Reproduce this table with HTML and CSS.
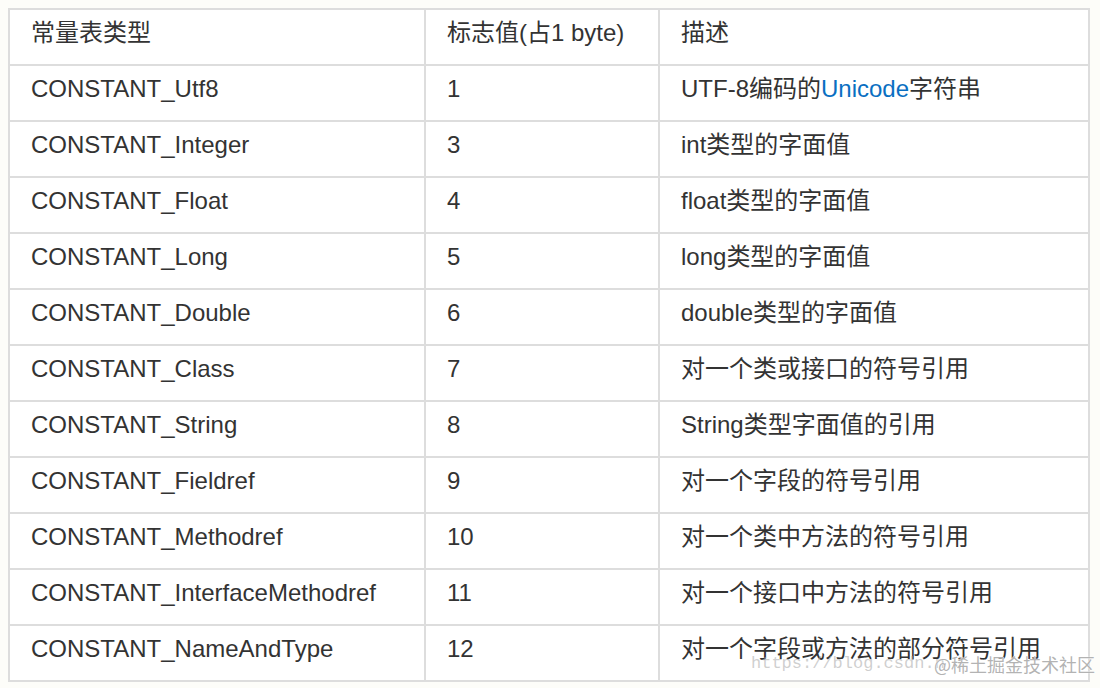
FILE: index.html
```html
<!DOCTYPE html>
<html lang="zh-CN">
<head>
<meta charset="utf-8">
<title>常量表类型</title>
<link rel="stylesheet" href="styles.css">
</head>
<body>
<div class="page">
  <table class="ctable">
    <colgroup>
      <col class="c1">
      <col class="c2">
      <col class="c3">
    </colgroup>
    <tbody>
      <tr><td>常量表类型</td><td>标志值(占1 byte)</td><td>描述</td></tr>
      <tr><td>CONSTANT_Utf8</td><td>1</td><td>UTF-8编码的<span class="link">Unicode</span>字符串</td></tr>
      <tr><td>CONSTANT_Integer</td><td>3</td><td>int类型的字面值</td></tr>
      <tr><td>CONSTANT_Float</td><td>4</td><td>float类型的字面值</td></tr>
      <tr><td>CONSTANT_Long</td><td>5</td><td>long类型的字面值</td></tr>
      <tr><td>CONSTANT_Double</td><td>6</td><td>double类型的字面值</td></tr>
      <tr><td>CONSTANT_Class</td><td>7</td><td>对一个类或接口的符号引用</td></tr>
      <tr><td>CONSTANT_String</td><td>8</td><td>String类型字面值的引用</td></tr>
      <tr><td>CONSTANT_Fieldref</td><td>9</td><td>对一个字段的符号引用</td></tr>
      <tr><td>CONSTANT_Methodref</td><td>10</td><td>对一个类中方法的符号引用</td></tr>
      <tr><td>CONSTANT_InterfaceMethodref</td><td>11</td><td>对一个接口中方法的符号引用</td></tr>
      <tr><td>CONSTANT_NameAndType</td><td>12</td><td>对一个字段或方法的部分符号引用</td></tr>
    </tbody>
  </table>
  <div class="wm-url">https://blog.csdn.n</div>
  <div class="wm-brand">@稀土掘金技术社区</div>
</div>
</body>
</html>
```

FILE: styles.css
```css
html, body {
  margin: 0;
  padding: 0;
  background: #fdfdf9;
}

.page {
  position: relative;
  width: 1100px;
  height: 688px;
  overflow: hidden;
  padding: 8px 0 0 8px;
  box-sizing: border-box;
}

.ctable {
  border-collapse: collapse;
  table-layout: fixed;
  width: 1080px;
  background: #ffffff;
  font-family: "Liberation Sans", "Noto Sans CJK SC", sans-serif;
  font-size: 24px;
  color: #333333;
}

.c1 { width: 416px; }
.c2 { width: 234px; }
.c3 { width: 430px; }

.ctable td {
  border: 2px solid #dddddd;
  height: 56px;
  box-sizing: border-box;
  padding: 5px 20px 0 21px;
  vertical-align: top;
  line-height: 36px;
  white-space: nowrap;
}

.link {
  color: #0a6fc2;
}

.wm-url {
  position: absolute;
  left: 751px;
  top: 653px;
  font-family: "Liberation Mono", monospace;
  font-size: 17px;
  line-height: 22px;
  color: rgba(175, 175, 175, 0.6);
  white-space: nowrap;
}

.wm-brand {
  position: absolute;
  left: 934px;
  top: 651px;
  font-family: "Noto Sans CJK SC", sans-serif;
  font-size: 18px;
  line-height: 26px;
  color: rgba(165, 165, 165, 0.85);
  text-shadow: 0 0 1px #ffffff, 0 0 1px #ffffff;
  white-space: nowrap;
}
```
